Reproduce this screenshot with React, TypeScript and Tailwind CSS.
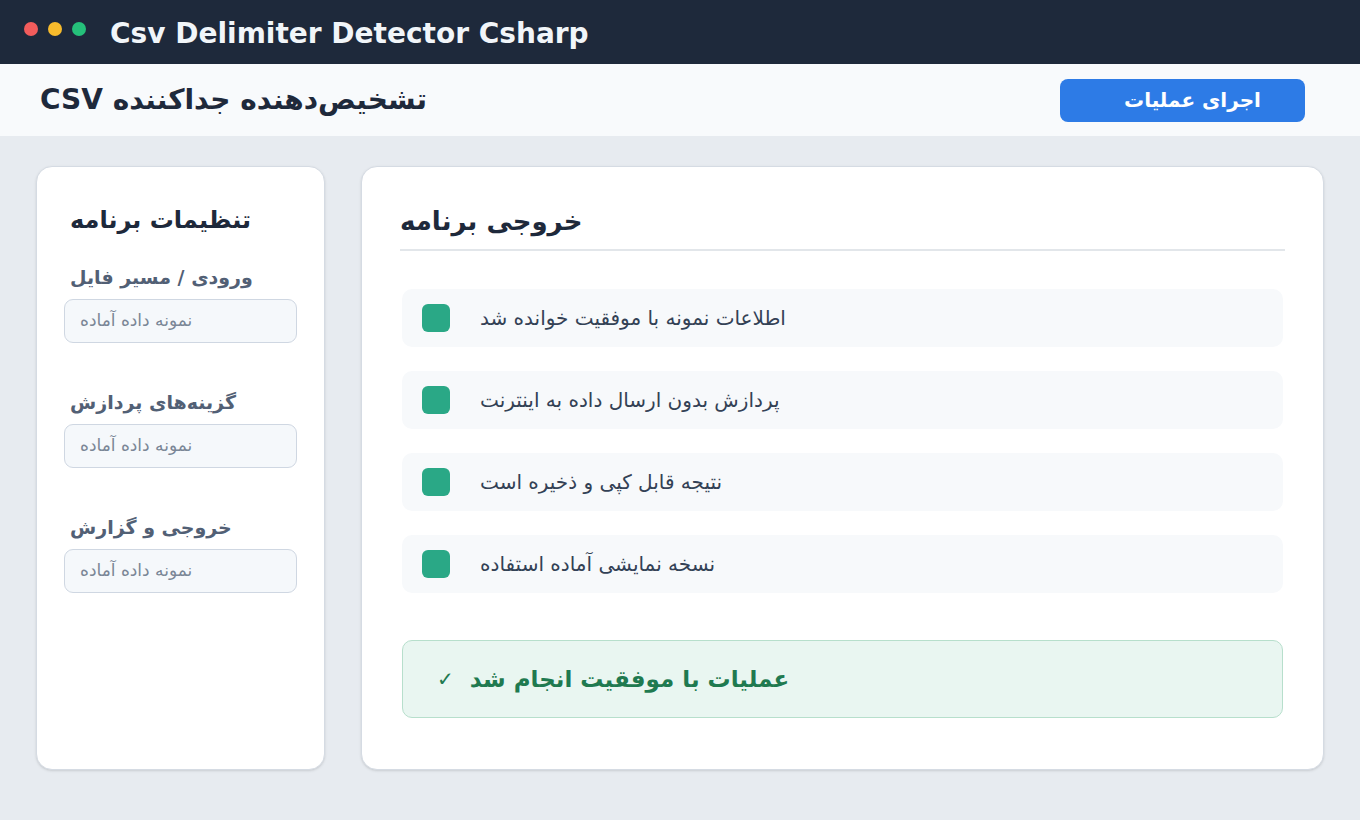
const font = { fontFamily: '"DejaVu Sans", "Noto Sans", sans-serif' };

const steps = [
  "اطلاعات نمونه با موفقیت خوانده شد",
  "پردازش بدون ارسال داده به اینترنت",
  "نتیجه قابل کپی و ذخیره است",
  "نسخه نمایشی آماده استفاده",
];

const fields = ["ورودی / مسیر فایل", "گزینه‌های پردازش", "خروجی و گزارش"];

export default function App() {
  return (
    <div className="min-h-[820px] bg-[#e7ebf0] font-['DejaVu_Sans',sans-serif]" style={font}>
      <header className="flex h-16 items-center bg-[#1e293b] pl-6">
        <div className="mb-1.5 flex gap-2.5">
          <span className="h-3.5 w-3.5 rounded-full bg-[#f25c5c]" />
          <span className="h-3.5 w-3.5 rounded-full bg-[#f8bb2c]" />
          <span className="h-3.5 w-3.5 rounded-full bg-[#25c07a]" />
        </div>
        <h1 className="ml-6 mt-1 text-[28px] font-bold text-[#f1f5f9]">Csv Delimiter Detector Csharp</h1>
      </header>

      <div className="flex h-[72px] items-center justify-between bg-[#f8fafc] pl-10 pr-[55px]">
        <h2 dir="rtl" className="text-[28px] font-bold text-[#1e293b]">تشخیص‌دهنده جداکننده CSV</h2>
        <button className="h-[43px] w-[245px] rounded-lg bg-[#2d7be6] pl-5 text-xl font-bold text-white">
          اجرای عملیات
        </button>
      </div>

      <main className="grid h-[634px] grid-cols-[289px_1fr] gap-9 px-9 pt-[30px]">
        <aside className="rounded-2xl border border-[#d5dbe3] bg-white px-[27px] pt-[35px] shadow-sm">
          <h3 className="px-1.5 text-2xl font-bold leading-9 text-[#1e293b]">تنظیمات برنامه</h3>
          <div className="mt-[25px] flex flex-col gap-[45px]">
            {fields.map((f) => (
              <div key={f} className="flex flex-col gap-2">
                <label className="px-1.5 text-[19px] font-bold leading-7 text-[#526075]">{f}</label>
                <div className="flex h-[44px] items-center rounded-[9px] border border-[#cfd7e2] bg-[#f5f8fb] px-[15px] text-[17px] text-[#7a8696]">
                  نمونه داده آماده
                </div>
              </div>
            ))}
          </div>
        </aside>

        <section className="rounded-2xl border border-[#d5dbe3] bg-white px-[38px] pt-[37px] shadow-sm">
          <h3 className="border-b-2 border-[#e2e6ea] pb-[11px] text-[26px] font-bold leading-[34px] text-[#1e293b]">
            خروجی برنامه
          </h3>
          <ul className="mt-[38px] flex flex-col gap-6 px-0.5">
            {steps.map((s) => (
              <li key={s} className="flex h-[58px] items-center gap-[30px] rounded-[10px] bg-[#f7f9fb] px-5">
                <span className="h-7 w-7 shrink-0 rounded-md bg-[#2aa886]" />
                <span className="text-xl text-[#334155]">{s}</span>
              </li>
            ))}
          </ul>
          <div className="mx-0.5 mt-[47px] flex h-[78px] items-center gap-4 rounded-[10px] border border-[#b7dfcc] bg-[#e9f6f1] px-[34px] text-[#1f7a50]">
            <span className="text-xl">✓</span>
            <span className="text-[23px] font-bold">عملیات با موفقیت انجام شد</span>
          </div>
        </section>
      </main>
    </div>
  );
}
